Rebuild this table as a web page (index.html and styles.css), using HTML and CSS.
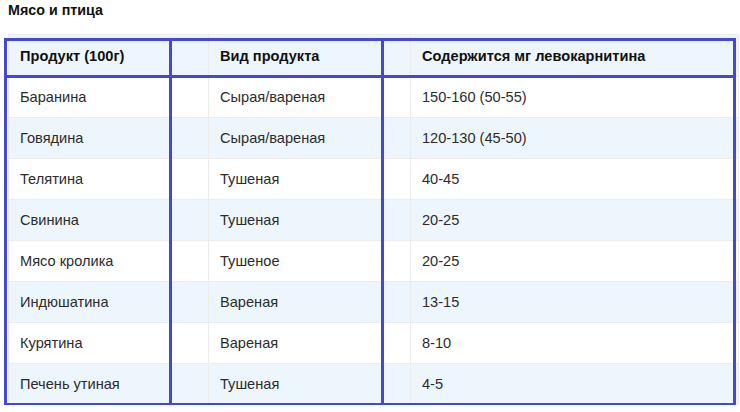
FILE: index.html
```html
<!DOCTYPE html>
<html lang="ru">
<head>
<meta charset="utf-8">
<link rel="stylesheet" href="styles.css">
</head>
<body>
<div class="page">
  <h3 class="title">Мясо и птица</h3>
  <div class="table-wrap">
    <table class="data">
      <colgroup>
        <col class="c1"><col class="c2"><col class="c3">
      </colgroup>
      <thead>
        <tr><th>Продукт (100г)</th><th>Вид продукта</th><th>Содержится мг левокарнитина</th></tr>
      </thead>
      <tbody>
        <tr><td>Баранина</td><td>Сырая/вареная</td><td>150-160 (50-55)</td></tr>
        <tr><td>Говядина</td><td>Сырая/вареная</td><td>120-130 (45-50)</td></tr>
        <tr><td>Телятина</td><td>Тушеная</td><td>40-45</td></tr>
        <tr><td>Свинина</td><td>Тушеная</td><td>20-25</td></tr>
        <tr><td>Мясо кролика</td><td>Тушеное</td><td>20-25</td></tr>
        <tr><td>Индюшатина</td><td>Вареная</td><td>13-15</td></tr>
        <tr><td>Курятина</td><td>Вареная</td><td>8-10</td></tr>
        <tr><td>Печень утиная</td><td>Тушеная</td><td>4-5</td></tr>
      </tbody>
    </table>
    <div class="mark mark-box"></div>
    <div class="mark mark-h"></div>
    <div class="mark mark-v1"></div>
    <div class="mark mark-v2"></div>
  </div>
</div>
</body>
</html>
```
FILE: styles.css
```css
html, body {
  margin: 0;
  padding: 0;
  background: #ffffff;
}
body {
  font-family: "Liberation Sans", Arial, sans-serif;
  color: #333333;
}
.page {
  padding: 2px 2px 0 8px;
}
.title {
  margin: 0 0 15px 0;
  font-size: 14.3px;
  line-height: 17px;
  font-weight: bold;
  color: #111111;
}
.table-wrap {
  position: relative;
  width: 730px;
}
.data {
  width: 730px;
  border-collapse: collapse;
  table-layout: fixed;
  font-size: 14.6px;
  line-height: 16px;
  background: #ffffff;
}
.c1 { width: 200px; }
.c2 { width: 202px; }
.c3 { width: 328px; }
.data th,
.data td {
  border: 1px solid #ececec;
  padding: 12px 11px;
  text-align: left;
  vertical-align: middle;
  height: 16px;
}
.data td {
  color: #2b2b2b;
}
.data th {
  font-weight: bold;
  color: #111111;
  background: #eef6fd;
  padding-top: 13px;
  padding-bottom: 12px;
}
.data tbody tr:nth-child(even) td {
  background: #eef6fd;
}
.mark {
  position: absolute;
  background: #4448d2;
}
.mark-box {
  background: transparent;
  border: 3px solid #4448d2;
  left: -4px;
  top: 4px;
  width: 726px;
  height: 362px;
}
.mark-h {
  left: -4px;
  top: 41px;
  width: 732px;
  height: 3px;
}
.mark-v1 {
  left: 161px;
  top: 4px;
  width: 3px;
  height: 368px;
}
.mark-v2 {
  left: 373px;
  top: 4px;
  width: 3px;
  height: 368px;
}
```
